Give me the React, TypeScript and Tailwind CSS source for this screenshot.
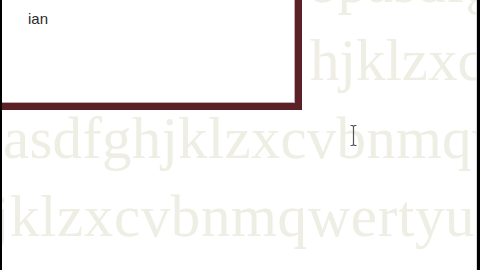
import React from "react";

// background rows of faint typed text, offsets measured from the screenshot
const rows = [
  { text: "opasdfghjklzx", indent: "pl-[306px]" },
  { text: "hjklzxcvbnm", indent: "pl-[308px]" },
  { text: "asdfghjklzxcvbnmqwertyuiop", indent: "pl-[1px] tracking-[0.2px]" },
  { text: "jklzxcvbnmqwertyuiop", indent: "-ml-[9px] tracking-[0.6px]" },
];

function TextCursor() {
  return (
    <svg
      className="absolute left-[347px] top-[124px]"
      width="9"
      height="23"
      viewBox="0 0 9 23"
      fill="none"
    >
      <path
        d="M1.5 1.5h2l1 1 1-1h2M4.5 2.5v18M1.5 21.5h2l1-1 1 1h2"
        stroke="#555555"
        strokeWidth="1.2"
      />
    </svg>
  );
}

export default function App() {
  return (
    <div className="w-[480px] h-[270px] flex bg-black overflow-hidden">
      <div className="w-[2px] bg-black" />

      <div className="relative flex-1 bg-white overflow-hidden">
        {/* faint editor text behind the popup */}
        <div
          className="-mt-[57px] flex flex-col text-[59px] leading-[78px] text-[#eeeee4] whitespace-nowrap"
          style={{ fontFamily: '"Liberation Serif", serif' }}
        >
          {rows.map((row, i) => (
            <div key={i} className={row.indent}>
              {row.text}
            </div>
          ))}
        </div>

        {/* popup panel */}
        <div className="absolute left-0 top-0 w-[300px] h-[110px] bg-[#5b2127] pr-[7px] pb-[7px]">
          <div className="h-full bg-white border-r border-b border-[#b9b0b0] pl-[26px] pt-[6px]">
            <span
              className="text-[15px] leading-[18px] text-[#2b2b2b]"
              style={{ fontFamily: '"Liberation Sans", Arial, sans-serif' }}
            >
              ian
            </span>
          </div>
        </div>

        <TextCursor />
      </div>

      <div className="w-[1px] bg-[#d9d9d9]" />
      <div className="w-[3px] bg-black" />
    </div>
  );
}
